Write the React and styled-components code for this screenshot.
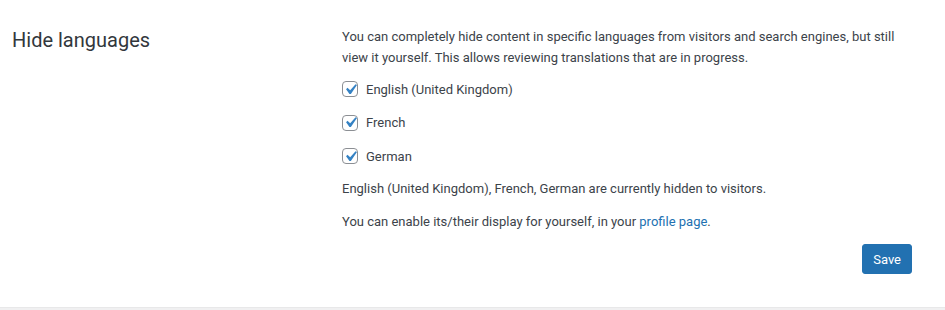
import React, { useState } from 'react';
import styled, { createGlobalStyle } from 'styled-components';

const GlobalStyle = createGlobalStyle`
  body {
    margin: 0;
    background-color: #f0f0f1;
    font-family: Roboto, "Liberation Sans", sans-serif;
    font-size: 13px;
    color: #3c434a;
  }
`;

const Section = styled.section`
  display: flex;
  background-color: #ffffff;
  padding: 26px 0 33px 12px;
  border-bottom: 1px solid #e8e8e9;
`;

const Heading = styled.h2`
  width: 330px;
  flex-shrink: 0;
  margin: 0;
  font-size: 20px;
  font-weight: 400;
  line-height: 28px;
  color: #32373c;
`;

const Content = styled.div`
  width: 570px;
  display: flex;
  flex-direction: column;
`;

const Text = styled.p`
  margin: 0 0 ${(p) => p.$gap || 0}px;
  line-height: 21px;
`;

const Options = styled.div`
  display: flex;
  flex-direction: column;
  gap: 9.5px;
  margin: 9px 0 9.5px;
`;

const Option = styled.label`
  display: flex;
  align-items: center;
  gap: 8px;
  height: 24px;
  cursor: pointer;
`;

const Box = styled.span`
  width: 16px;
  height: 16px;
  box-sizing: border-box;
  border: 1px solid #8c8f94;
  border-radius: 4px;
  background: #fff;
  display: flex;
  align-items: center;
  justify-content: center;
  overflow: visible;

  svg {
    flex-shrink: 0;
    margin: -3px;
  }
`;

const Link = styled.a`
  color: #2271b1;
  text-decoration: none;
`;

const Actions = styled.div`
  display: flex;
  justify-content: flex-end;
  margin-top: 12.5px;
`;

const SaveButton = styled.button`
  height: 30px;
  padding: 0 10px;
  font-family: inherit;
  font-size: 13px;
  color: #fff;
  background-color: #2271b1;
  border: 1px solid #2271b1;
  border-radius: 3px;
  cursor: pointer;
`;

const Check = () => (
  <svg width="21" height="21" viewBox="0 0 20 20">
    <path d="M14.83 4.89l1.34.94-5.81 8.38H9.02L5.78 9.67l1.34-1.25 2.57 2.4z" fill="#3582c4" />
  </svg>
);

const languages = ['English (United Kingdom)', 'French', 'German'];

const App = () => {
  const [checked, setChecked] = useState(languages.map(() => true));

  return (
    <>
      <GlobalStyle />
      <Section>
        <Heading>Hide languages</Heading>
        <Content>
          <Text>
            You can completely hide content in specific languages from visitors and search engines, but still
            view it yourself. This allows reviewing translations that are in progress.
          </Text>
          <Options>
            {languages.map((lang, i) => (
              <Option
                key={lang}
                onClick={() => setChecked(checked.map((c, j) => (j === i ? !c : c)))}
              >
                <Box>{checked[i] && <Check />}</Box>
                {lang}
              </Option>
            ))}
          </Options>
          <Text $gap={12}>English (United Kingdom), French, German are currently hidden to visitors.</Text>
          <Text>
            You can enable its/their display for yourself, in your <Link href="#">profile page</Link>.
          </Text>
          <Actions>
            <SaveButton>Save</SaveButton>
          </Actions>
        </Content>
      </Section>
    </>
  );
};

export default App;
